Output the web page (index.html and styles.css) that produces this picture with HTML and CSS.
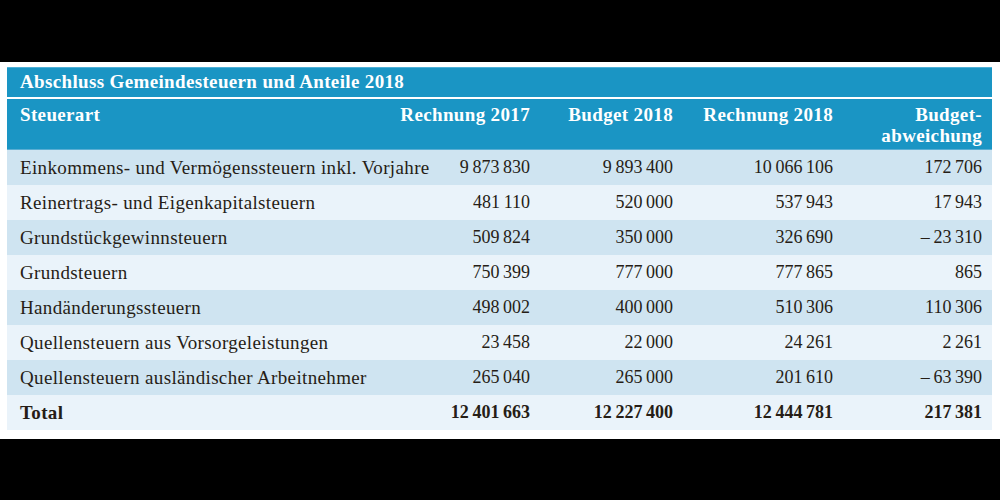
FILE: index.html
```html
<!DOCTYPE html>
<html lang="de">
<head>
<meta charset="utf-8">
<title>Abschluss Gemeindesteuern und Anteile 2018</title>
<link rel="stylesheet" href="styles.css">
</head>
<body>
<div class="band"></div>
<main class="sheet">
  <table class="tax">
    <colgroup>
      <col class="c-name"><col class="c-a"><col class="c-b"><col class="c-c"><col class="c-d">
    </colgroup>
    <thead>
      <tr class="title"><th colspan="5">Abschluss Gemeindesteuern und Anteile 2018</th></tr>
      <tr class="head">
        <th class="name">Steuerart</th>
        <th class="num">Rechnung 2017</th>
        <th class="num">Budget 2018</th>
        <th class="num">Rechnung 2018</th>
        <th class="num last">Budget-<br>abweichung</th>
      </tr>
    </thead>
    <tbody>
      <tr class="odd"><td class="name">Einkommens- und Vermögenssteuern inkl. Vorjahre</td><td class="num">9&#8201;873&#8201;830</td><td class="num">9&#8201;893&#8201;400</td><td class="num">10&#8201;066&#8201;106</td><td class="num last">172&#8201;706</td></tr>
      <tr class="even"><td class="name">Reinertrags- und Eigenkapitalsteuern</td><td class="num">481&#8201;110</td><td class="num">520&#8201;000</td><td class="num">537&#8201;943</td><td class="num last">17&#8201;943</td></tr>
      <tr class="odd"><td class="name">Grundstückgewinnsteuern</td><td class="num">509&#8201;824</td><td class="num">350&#8201;000</td><td class="num">326&#8201;690</td><td class="num last">–&#8201;23&#8201;310</td></tr>
      <tr class="even"><td class="name">Grundsteuern</td><td class="num">750&#8201;399</td><td class="num">777&#8201;000</td><td class="num">777&#8201;865</td><td class="num last">865</td></tr>
      <tr class="odd"><td class="name">Handänderungssteuern</td><td class="num">498&#8201;002</td><td class="num">400&#8201;000</td><td class="num">510&#8201;306</td><td class="num last">110&#8201;306</td></tr>
      <tr class="even"><td class="name">Quellensteuern aus Vorsorgeleistungen</td><td class="num">23&#8201;458</td><td class="num">22&#8201;000</td><td class="num">24&#8201;261</td><td class="num last">2&#8201;261</td></tr>
      <tr class="odd"><td class="name">Quellensteuern ausländischer Arbeitnehmer</td><td class="num">265&#8201;040</td><td class="num">265&#8201;000</td><td class="num">201&#8201;610</td><td class="num last">–&#8201;63&#8201;390</td></tr>
      <tr class="even total"><td class="name">Total</td><td class="num">12&#8201;401&#8201;663</td><td class="num">12&#8201;227&#8201;400</td><td class="num">12&#8201;444&#8201;781</td><td class="num last">217&#8201;381</td></tr>
    </tbody>
  </table>
</main>
<div class="band bottom"></div>
</body>
</html>
```
FILE: styles.css
```css
html, body {
  margin: 0;
  padding: 0;
  background: #000;
  height: 100%;
}
body {
  font-family: "Liberation Serif", "Times New Roman", serif;
  color: #261d16;
  overflow: hidden;
}
.band {
  height: 62px;
  background: #000;
}
.sheet {
  background: #fff;
  padding: 5px 8px 9px 7px;
}
.tax {
  width: 985px;
  table-layout: fixed;
  border-collapse: collapse;
  border-spacing: 0;
}
.c-name { width: 388px; }
.c-a { width: 135px; }
.c-b { width: 143px; }
.c-c { width: 160px; }
.c-d { width: 159px; }

.tax th, .tax td {
  padding: 0;
  font-size: 19px;
  letter-spacing: 0.35px;
  white-space: nowrap;
}
.tax .name {
  text-align: left;
  padding-left: 13px;
}
.tax td.num {
  text-align: right;
  font-size: 18px;
  letter-spacing: 0;
}
.tax th.num {
  text-align: right;
}
.tax .last {
  padding-right: 10px;
}

.title th {
  background: #1a95c4;
  color: #fff;
  text-align: left;
  padding-left: 13px;
  height: 30px;
  font-weight: bold;
  border-top: 1px solid #4fb0d6;
  border-bottom: 2px solid #fff;
  box-sizing: border-box;
}
.head th {
  background: #1a95c4;
  color: #fff;
  font-weight: bold;
  height: 52px;
  vertical-align: top;
  padding-top: 5px;
  line-height: 21px;
  box-sizing: border-box;
  border-bottom: 1px solid #5aaed3;
}
.tax tbody td {
  height: 35px;
}
.odd td { background: #cfe4f1; }
.even td { background: #eaf3fa; }
.total td { font-weight: bold; height: 36px; }
.bottom {
  height: 61px;
}
```
